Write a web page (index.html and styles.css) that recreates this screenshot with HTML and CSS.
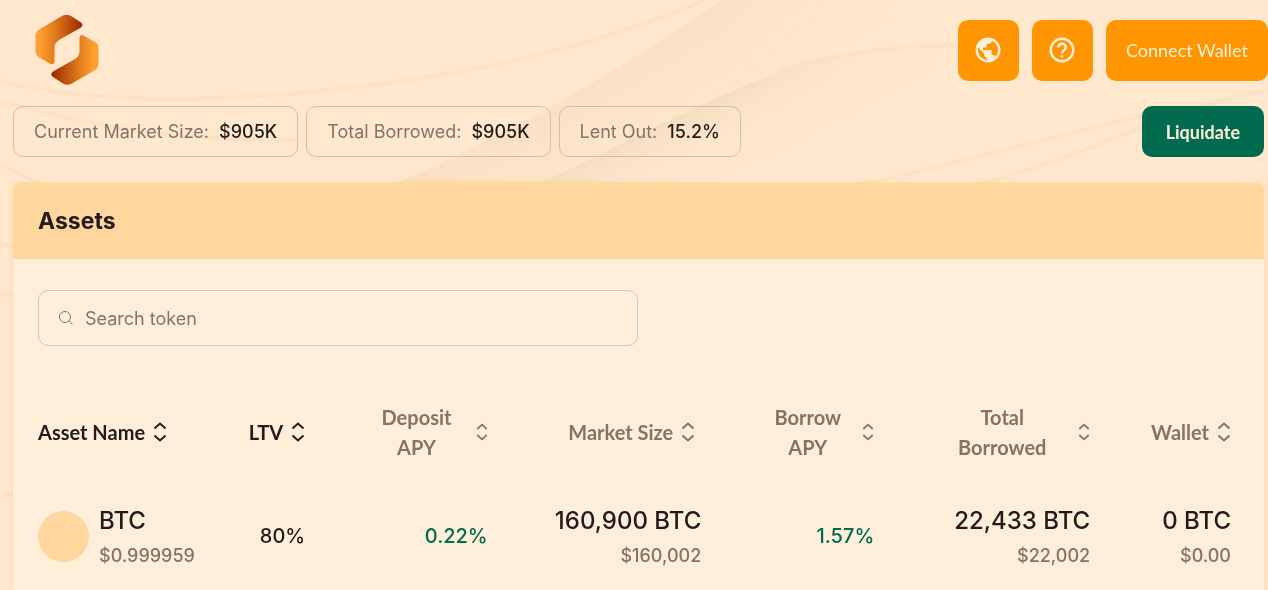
FILE: index.html
```html
<!DOCTYPE html>
<html lang="en">
<head>
  <meta charset="UTF-8">
  <meta name="viewport" content="width=device-width, initial-scale=1.0">
  <title>Assets</title>
  <link rel="stylesheet" href="styles.css">
</head>
<body>

  <!-- background waves -->
  <svg class="waves" viewBox="0 0 1268 590" preserveAspectRatio="none" aria-hidden="true">
    <defs>
      <linearGradient id="fold" gradientUnits="userSpaceOnUse" x1="660" y1="100" x2="700" y2="190">
        <stop offset="0" stop-color="#c9b596" stop-opacity=".36"/>
        <stop offset=".35" stop-color="#d9c4a5" stop-opacity=".16"/>
        <stop offset="1" stop-color="#ffe8cd" stop-opacity="0"/>
      </linearGradient>
      <linearGradient id="fold2" gradientUnits="userSpaceOnUse" x1="540" y1="100" x2="600" y2="200">
        <stop offset="0" stop-color="#d8b890" stop-opacity=".14"/>
        <stop offset="1" stop-color="#d8b890" stop-opacity="0"/>
      </linearGradient>
      <linearGradient id="fadeRight" x1="0" y1="0" x2="1" y2="0">
        <stop offset="0" stop-color="#fff"/>
        <stop offset=".6" stop-color="#fff"/>
        <stop offset="1" stop-color="#000"/>
      </linearGradient>
      <mask id="fade" maskUnits="userSpaceOnUse" x="380" y="0" width="580" height="200">
        <rect x="380" y="0" width="580" height="200" fill="url(#fadeRight)"/>
      </mask>
      <filter id="soft"><feGaussianBlur stdDeviation="1"/></filter>
    </defs>
    <g mask="url(#fade)">
      <path fill="url(#fold2)" d="M380 190 C500 140 620 70 722 0 L900 0 L900 190Z"/>
      <path fill="url(#fold)" d="M536 184 C640 140 740 75 840 56 C880 48 920 46 960 45 L960 200 L536 200Z"/>
    </g>
    <g class="wave-lines" filter="url(#soft)">
      <path d="M0 81 C90 103 200 103 320 91 C480 75 600 45 705 0"/>
      <path d="M0 102 C90 124 160 142 300 140"/>
      <path d="M0 165 C20 172 30 180 50 190"/>
      <path d="M780 70 C840 51 900 46 960 45"/>
      <path d="M860 184 C960 164 1040 140 1160 112"/>
      <path d="M980 184 C1080 160 1160 110 1268 90"/>
      <path d="M0 245 C6 244 10 246 14 247"/>
      <path d="M0 294 L14 294"/>
      <path d="M0 498 L14 493"/>
    </g>
  </svg>

  <header class="topbar">
    <a href="#" class="logo" aria-label="Home">
      <svg width="64" height="72" viewBox="0 0 64 72">
        <defs>
          <linearGradient id="logoA" x1="0" y1="0" x2="1" y2="0">
            <stop offset=".1" stop-color="#ff9f30"/>
            <stop offset=".4" stop-color="#e27c1c"/>
            <stop offset="1" stop-color="#982800"/>
          </linearGradient>
          <linearGradient id="logoB" x1="1" y1="0" x2="0" y2="0">
            <stop offset=".1" stop-color="#ff9f30"/>
            <stop offset=".4" stop-color="#e27c1c"/>
            <stop offset="1" stop-color="#982800"/>
          </linearGradient>
        </defs>
        <path fill="url(#logoA)" d="M27 2 Q31.500 -.5 36 2 L46 8.500 Q49 11 46 13.500 L24 26 Q20 28.500 19.500 33 V47 Q19 51 15.500 50 L4 43.500 Q.5 41.500 .5 37 V22 Q.5 18 4 15.500Z"/>
        <path fill="url(#logoB)" d="M37 69.500 Q32.500 72 28 69.500 L18 63 Q14.500 60.500 18 57.500 L40 45 Q44 42.500 44.500 38 V24 Q45 20 48.500 21.500 L60 28 Q63.500 30 63.500 34 V49 Q63.500 53.500 60 56Z"/>
      </svg>
    </a>
    <div class="actions">
      <button type="button" class="btn btn-icon" aria-label="Network">
        <svg width="30" height="30" viewBox="0 0 24 24" fill="currentColor"><path d="M12 2C6.480 2 2 6.480 2 12s4.480 10 10 10 10-4.480 10-10S17.520 2 12 2zm-1 17.930c-3.950-.49-7-3.850-7-7.930 0-.62.080-1.210.210-1.790L9 15v1c0 1.100.9 2 2 2v1.930zm6.900-2.540c-.26-.81-1-1.390-1.900-1.390h-1v-3c0-.55-.45-1-1-1H8v-2h2c.55 0 1-.45 1-1V7h2c1.100 0 2-.9 2-2v-.41c2.930 1.190 5 4.060 5 7.410 0 2.080-.8 3.970-2.100 5.390z"/></svg>
      </button>
      <button type="button" class="btn btn-icon" aria-label="Help">
        <svg width="30" height="30" viewBox="0 0 24 24" fill="currentColor"><path d="M11 18h2v-2h-2v2zm1-16C6.480 2 2 6.480 2 12s4.480 10 10 10 10-4.480 10-10S17.520 2 12 2zm0 18c-4.410 0-8-3.590-8-8s3.590-8 8-8 8 3.590 8 8-3.590 8-8 8zm0-14c-2.210 0-4 1.790-4 4h2c0-1.100.9-2 2-2s2 .9 2 2c0 2-3 1.750-3 5h2c0-2.250 3-2.500 3-5 0-2.210-1.790-4-4-4z"/></svg>
      </button>
      <button type="button" class="btn btn-wallet">Connect Wallet</button>
    </div>
  </header>

  <main>
    <div class="stats">
      <div class="stat">Current Market Size: <strong>$905K</strong></div>
      <div class="stat">Total Borrowed: <strong>$905K</strong></div>
      <div class="stat">Lent Out: <strong>15.2%</strong></div>
      <button type="button" class="btn btn-liquidate">Liquidate</button>
    </div>

    <section class="card">
      <h1 class="card-title">Assets</h1>
      <div class="card-body">
        <label class="search">
          <svg width="16" height="16" viewBox="0 0 16 16" fill="none" stroke="currentColor"><circle cx="7" cy="7" r="5.500"/><path d="M11 11l3.500 3.500"/></svg>
          <input type="text" placeholder="Search token" aria-label="Search token">
        </label>

        <svg class="defs" aria-hidden="true">
          <symbol id="sort" viewBox="0 0 14 20"><path d="M1.500 6.500L7 1.500l5.500 5M1.500 13.500L7 18.500l5.500-5"/></symbol>
        </svg>

        <table class="assets">
          <colgroup>
            <col class="col-asset"><col class="col-ltv"><col class="col-deposit"><col class="col-market">
            <col class="col-borrow"><col class="col-total"><col class="col-wallet">
          </colgroup>
          <thead>
            <tr>
              <th class="dark"><button type="button" class="sort"><span>Asset Name</span><svg><use href="#sort"/></svg></button></th>
              <th class="dark"><button type="button" class="sort"><span>LTV</span><svg><use href="#sort"/></svg></button></th>
              <th class="wrap"><button type="button" class="sort"><span>Deposit APY</span><svg><use href="#sort"/></svg></button></th>
              <th class="amount"><button type="button" class="sort"><span>Market Size</span><svg><use href="#sort"/></svg></button></th>
              <th class="wrap"><button type="button" class="sort"><span>Borrow APY</span><svg><use href="#sort"/></svg></button></th>
              <th class="wrap"><button type="button" class="sort"><span>Total Borrowed</span><svg><use href="#sort"/></svg></button></th>
              <th><button type="button" class="sort"><span>Wallet</span><svg><use href="#sort"/></svg></button></th>
            </tr>
          </thead>
          <tbody>
            <tr>
              <td>
                <div class="asset">
                  <span class="coin"></span>
                  <div><div class="main">BTC</div><div class="sub">$0.999959</div></div>
                </div>
              </td>
              <td class="rate">80%</td>
              <td class="rate green">0.22%</td>
              <td><div class="main">160,900 BTC</div><div class="sub">$160,002</div></td>
              <td class="rate green">1.57%</td>
              <td><div class="main">22,433 BTC</div><div class="sub">$22,002</div></td>
              <td><div class="main">0 BTC</div><div class="sub">$0.00</div></td>
            </tr>
          </tbody>
        </table>
      </div>
    </section>
  </main>

</body>
</html>
```

FILE: styles.css
```css
* {
  box-sizing: border-box;
}

body {
  margin: 0;
  background-color: #ffe8cd;
  color: #231b1b;
  font-family: Inter, sans-serif;
  font-size: 18px;
}

.waves {
  position: fixed;
  inset: 0;
  z-index: -1;
  width: 100%;
  height: 100%;
}

.wave-lines {
  fill: none;
  stroke: #e5c9a6;
  stroke-width: 2;
  opacity: 0.3;
}

.topbar {
  display: flex;
  justify-content: space-between;
  align-items: center;
  height: 100px;
  padding-left: 35px;
}

.logo svg {
  display: block;
}

.actions {
  display: flex;
  gap: 13px;
}

.btn {
  border: none;
  border-radius: 10px;
  background-color: #ff9500;
  color: #ffefda;
  font-family: Lato, sans-serif;
  font-size: 18px;
  cursor: pointer;
}

.btn-icon {
  display: flex;
  align-items: center;
  justify-content: center;
  width: 61px;
  height: 61px;
}

.btn-wallet {
  padding: 0 20px;
}

main {
  padding: 6px 4px 0 13px;
}

.stats {
  display: flex;
  gap: 8px;
  margin-bottom: 26px;
}

.stat {
  padding: 0 20px;
  border: 1px solid #d0bfa6;
  border-radius: 10px;
  color: #81756a;
  line-height: 49px;
}

.stat strong {
  margin-left: 5px;
  color: #231b1b;
  font-weight: 500;
}

.btn-liquidate {
  margin-left: auto;
  padding: 0 24px;
  background-color: #006b4f;
  font-weight: 700;
}

.card {
  border-radius: 6px 6px 0 0;
  background-color: #ffefda;
  box-shadow: 0 0 6px rgba(255, 190, 100, 0.4);
}

.card-title {
  margin: 0;
  padding: 0 25px;
  border-radius: 6px 6px 0 0;
  background-color: #ffd79e;
  font-size: 23px;
  font-weight: 700;
  line-height: 76px;
}

.card-body {
  padding: 31px 33px 19px 25px;
}

.search {
  display: flex;
  align-items: center;
  gap: 11px;
  width: 100%;
  max-width: 600px;
  height: 56px;
  padding: 0 19px;
  border: 1px solid #d5c6b3;
  border-radius: 10px;
  color: #81756a;
}

.search input {
  flex: 1;
  padding: 0;
  border: none;
  outline: none;
  background: none;
  color: #231b1b;
  font: inherit;
}

.search input::placeholder {
  color: #81756a;
  opacity: 1;
}

.defs {
  display: none;
}

.assets {
  width: 100%;
  margin-top: 48px;
  border-collapse: collapse;
  table-layout: fixed;
}

.col-asset { width: 15.4%; }
.col-ltv { width: 7%; }
.col-deposit { width: 15.3%; }
.col-market { width: 17.9%; }
.col-borrow { width: 14.5%; }
.col-total { width: 18.1%; }
.col-wallet { width: 11.8%; }

.assets th {
  height: 76px;
  padding: 0 0 0 60px;
  color: #81756a;
}

.assets th.dark {
  padding-left: 0;
  color: #231b1b;
}

.assets th.amount {
  padding-right: 6px;
}

.sort {
  display: flex;
  align-items: center;
  justify-content: flex-end;
  gap: 8px;
  width: 100%;
  padding: 0;
  border: none;
  background: none;
  color: inherit;
  font-family: Lato, sans-serif;
  font-size: 20px;
  font-weight: 700;
  line-height: 30px;
  cursor: pointer;
}

.sort svg {
  flex: none;
  width: 14px;
  height: 20px;
  fill: none;
  stroke: currentColor;
  stroke-width: 2;
}

.wrap .sort svg {
  width: 12px;
  height: 18px;
}

th:first-child .sort {
  justify-content: flex-start;
}

.assets td {
  padding: 31px 0 0;
  text-align: right;
  white-space: nowrap;
}

.asset {
  display: flex;
  align-items: center;
  gap: 10px;
  text-align: left;
}

.coin {
  width: 51px;
  height: 51px;
  border-radius: 50%;
  background-color: #ffd79e;
}

.main {
  font-size: 24px;
  font-weight: 500;
  line-height: 40px;
}

.sub {
  color: #81756a;
  font-weight: 500;
  line-height: 30px;
}

.assets .rate {
  font-size: 20px;
  font-weight: 500;
}

.green {
  color: #006b4f;
}
```
